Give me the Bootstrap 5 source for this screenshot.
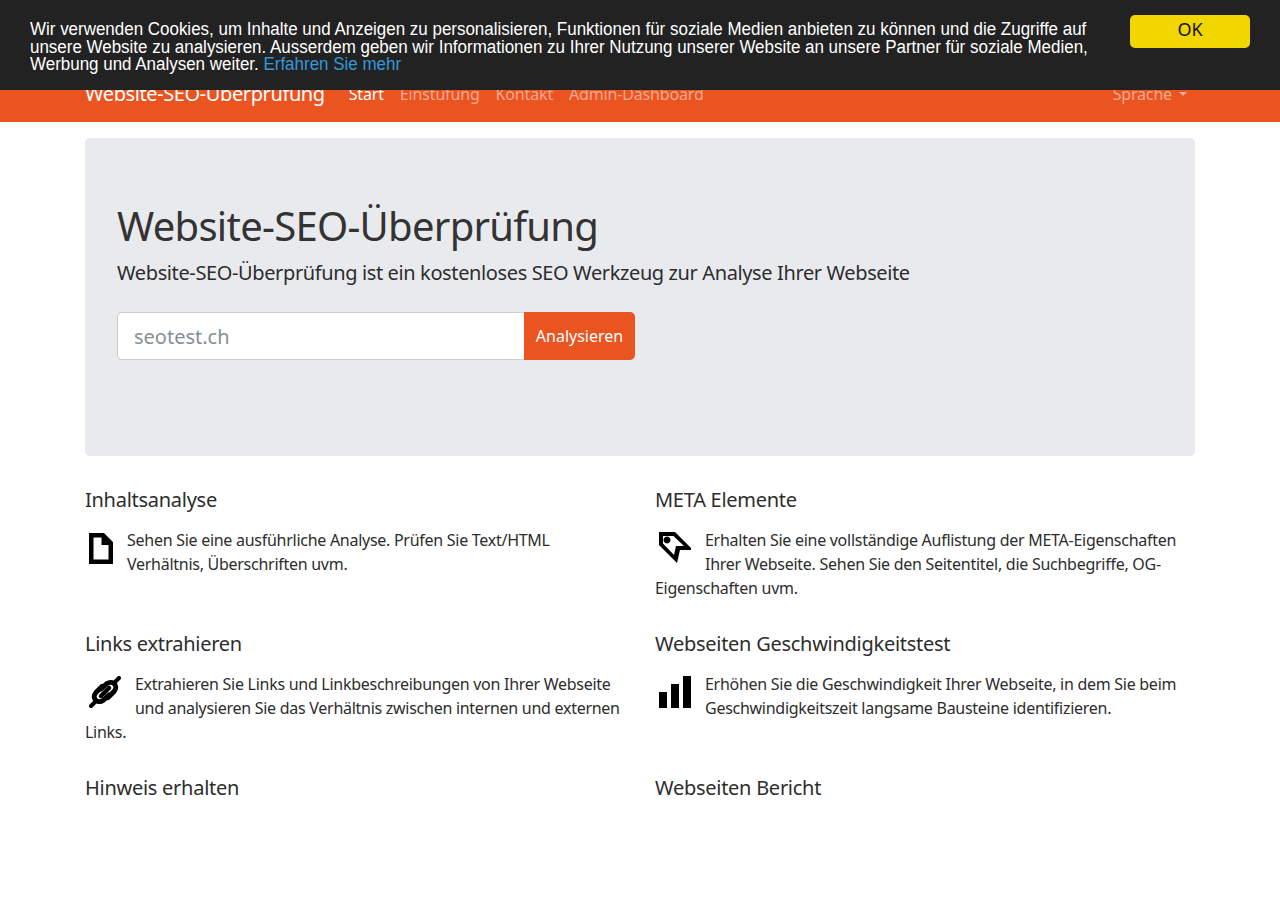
<!DOCTYPE html>
<html lang="de">

<head>
    <meta charset="UTF-8">
    <meta name="viewport" content="width=device-width, initial-scale=1.0">
    <title>Website-SEO-Überprüfung</title>
    <link rel="stylesheet" href="https://cdn.jsdelivr.net/npm/bootstrap@5.3.0/dist/css/bootstrap.min.css">
    <style>
        body {
            font-family: "Noto Sans", "Open Sans", sans-serif;
            color: #2d2d2d;
            padding-top: 66px;
            height: 900px;
            overflow: hidden;
            font-size: 16px;
            line-height: 24px;
            letter-spacing: -.017em;
        }

        .cookie-bar {
            background-color: #222;
            color: #fff;
            height: 90px;
            padding: 21px 30px 0;
            font-family: "Liberation Sans", Arial, sans-serif;
            font-size: 18px;
            line-height: 17.5px;
            letter-spacing: 0;
        }

        .cookie-bar a {
            color: #3498db;
            text-decoration: none;
        }

        .cookie-text {
            width: 1152px;
            transform: scaleX(.942);
            transform-origin: left top;
        }

        .cookie-ok {
            width: 120px;
            height: 33px;
            padding: 0 0 6px;
            border: 0;
            border-radius: 5px;
            background-color: #f1d600;
            color: #111;
            font-family: "Noto Sans", sans-serif;
            font-size: 18px;
            line-height: 24px;
            position: fixed;
            top: 15px;
            right: 30px;
        }

        .seo-nav {
            background-color: #e95420;
            height: 56px;
            padding: 0;
        }

        .seo-wrap {
            width: 1110px;
            max-width: none;
            margin: 0 auto;
            padding: 0;
        }

        .seo-nav .navbar-brand {
            font-size: 20px;
            color: #fff;
            padding: 0;
            margin-right: 16px;
            line-height: 30px;
            letter-spacing: -.02em;
        }

        .seo-nav .nav-link {
            padding: 8px;
            color: rgba(255, 255, 255, .5);
            line-height: 24px;
            letter-spacing: -.01em;
        }

        .seo-nav .nav-link.active {
            color: #fff;
        }

        .seo-nav .dropdown-toggle::after {
            margin-left: 7px;
        }

        .hero-box {
            background-color: #e9eaee;
            border-radius: 5px;
            height: 318px;
            margin: 16px 0 32px;
            padding: 64px 32px 0;
        }

        .hero-box h1 {
            font-size: 40px;
            line-height: 48px;
            font-weight: 400;
            margin-bottom: 8px;
            color: #333;
            letter-spacing: -.018em;
        }

        .hero-sub {
            font-size: 20px;
            line-height: 30px;
            margin-bottom: 24px;
            letter-spacing: -.019em;
        }

        .url-group {
            width: 518px;
        }

        .url-group .form-control {
            height: 48px;
            font-size: 20px;
            padding: 8px 16px;
            border-color: #ccc;
            border-radius: 5px 0 0 5px;
            letter-spacing: 0;
        }

        .url-group .form-control::placeholder {
            color: #868e96;
        }

        .btn-analyse {
            background-color: #e95420;
            border: 0;
            color: #fff;
            width: 111px;
            padding: 0;
            font-size: 16px;
            border-radius: 0 5px 5px 0;
        }

        .feature-grid {
            display: grid;
            grid-template-columns: 540px 540px;
            column-gap: 30px;
            row-gap: 16px;
        }

        .feature-item h4 {
            font-size: 20px;
            line-height: 24px;
            font-weight: 400;
            margin-bottom: 16px;
        }

        .feature-item p {
            height: 72px;
            margin-bottom: 16px;
        }

        .feature-icon {
            float: left;
            margin: 4px 14px 0 4px;
            display: block;
        }
    </style>
</head>

<body>
    <div class="cookie-bar fixed-top">
        <div class="cookie-text">Wir verwenden Cookies, um Inhalte und Anzeigen zu personalisieren, Funktionen für soziale Medien anbieten zu können und die Zugriffe auf unsere Website zu analysieren. Ausserdem geben wir Informationen zu Ihrer Nutzung unserer Website an unsere Partner für soziale Medien, Werbung und Analysen weiter. <a href="#">Erfahren Sie mehr</a></div>
        <button class="btn cookie-ok">OK</button>
    </div>

    <nav class="navbar navbar-expand-lg seo-nav">
        <div class="container seo-wrap d-flex align-items-center">
            <a class="navbar-brand" href="#">Website-SEO-Überprüfung</a>
            <ul class="navbar-nav me-auto flex-row">
                <li class="nav-item"><a class="nav-link active" href="#">Start</a></li>
                <li class="nav-item"><a class="nav-link" href="#">Einstufung</a></li>
                <li class="nav-item"><a class="nav-link" href="#">Kontakt</a></li>
                <li class="nav-item"><a class="nav-link" href="#">Admin-Dashboard</a></li>
            </ul>
            <ul class="navbar-nav flex-row">
                <li class="nav-item dropdown"><a class="nav-link dropdown-toggle" href="#" data-bs-toggle="dropdown">Sprache</a></li>
            </ul>
        </div>
    </nav>

    <div class="container seo-wrap">
        <div class="hero-box">
            <h1>Website-SEO-Überprüfung</h1>
            <p class="hero-sub">Website-SEO-Überprüfung ist ein kostenloses SEO Werkzeug zur Analyse Ihrer Webseite</p>
            <div class="input-group url-group">
                <input type="text" class="form-control" placeholder="seotest.ch">
                <button class="btn btn-analyse">Analysieren</button>
            </div>
        </div>

        <div class="feature-grid">
            <div class="feature-item">
                <h4>Inhaltsanalyse</h4>
                <p>
                    <svg class="feature-icon" width="24" height="32" viewBox="0 0 24 32"><path fill-rule="evenodd" d="M0 1h15l9 9v22H0zM4.500 5.500v22h15V13h-7V5.500z"/></svg>
                    Sehen Sie eine ausführliche Analyse. Prüfen Sie Text/HTML Verhältnis, Überschriften uvm.
                </p>
            </div>
            <div class="feature-item">
                <h4>META Elemente</h4>
                <p>
                    <svg class="feature-icon" width="32" height="32" viewBox="0 0 32 32"><path fill-rule="evenodd" d="M0 0H16L32 16V18H21L18 31 0 13zM4 4V11.500L15 23 17 14H25L14.500 4zM8 4.500a3.500 3.500 0 1 0 .01 0z"/></svg>
                    Erhalten Sie eine vollständige Auflistung der META-Eigenschaften Ihrer Webseite. Sehen Sie den Seitentitel, die Suchbegriffe, OG-Eigenschaften uvm.
                </p>
            </div>
            <div class="feature-item">
                <h4>Links extrahieren</h4>
                <p>
                    <svg class="feature-icon" width="32" height="32" viewBox="0 0 32 32"><g fill="none" stroke="#000" stroke-linecap="round"><path stroke-width="4" d="M2 30l5-5M25 7l5-5"/><path stroke-width="5" d="M12 13l6-5.500c3-2 6-1 7.500.5s2 4.500-.5 7.500l-6 6M20 19l-6 5.500c-3 2-6 1-7.500-.5s-2-4.500.5-7.500l6-6"/><path stroke-width="4.500" d="M12 20l8-8"/></g></svg>
                    Extrahieren Sie Links und Linkbeschreibungen von Ihrer Webseite und analysieren Sie das Verhältnis zwischen internen und externen Links.
                </p>
            </div>
            <div class="feature-item">
                <h4>Webseiten Geschwindigkeitstest</h4>
                <p>
                    <svg class="feature-icon" width="32" height="32" viewBox="0 0 32 32"><path d="M0 16h8v16H0zM12 8h8v24h-8zM24 0h8v32h-8z"/></svg>
                    Erhöhen Sie die Geschwindigkeit Ihrer Webseite, in dem Sie beim Geschwindigkeitszeit langsame Bausteine identifizieren.
                </p>
            </div>
            <div class="feature-item">
                <h4>Hinweis erhalten</h4>
            </div>
            <div class="feature-item">
                <h4>Webseiten Bericht</h4>
            </div>
        </div>
    </div>

    <script src="https://cdn.jsdelivr.net/npm/bootstrap@5.3.0/dist/js/bootstrap.bundle.min.js"></script>
</body>

</html>
